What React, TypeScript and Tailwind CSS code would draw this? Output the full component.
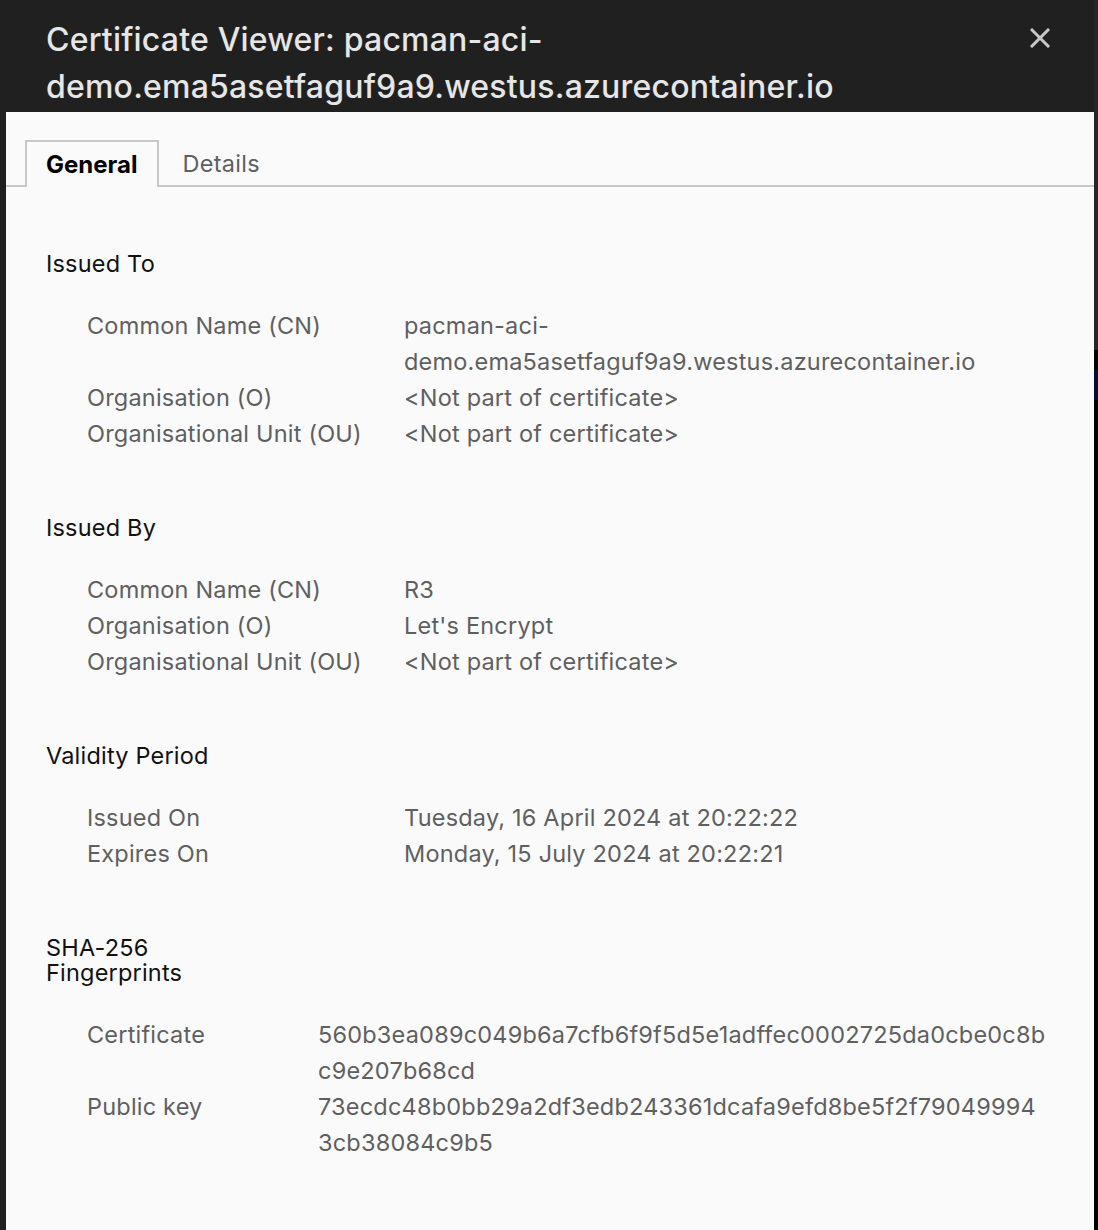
import React from "react";

type Row = { label: string; value: React.ReactNode };

const Section: React.FC<{ title: string[]; rows: Row[]; cols: string; first?: boolean }> = ({ title, rows, cols, first }) => {
  return (
    <div className={first ? "" : "mt-[63px]"}>
      <h2 className="text-[23.5px] tracking-[0.2px] leading-[25px] text-[#111]">
        {title.map((t) => (
          <div key={t} className="h-[25px]">
            {t}
          </div>
        ))}
      </h2>
      <div className={`mt-[32px] pl-[41px] grid ${cols} text-[23.5px] tracking-[0.2px] leading-[36px] text-[#5f5f5f]`}>
        {rows.map((r) => (
          <React.Fragment key={r.label}>
            <div>{r.label}</div>
            <div className="whitespace-nowrap">{r.value}</div>
          </React.Fragment>
        ))}
      </div>
    </div>
  );
};

const App: React.FC = () => {
  return (
    <div className="w-[1098px] h-[1230px] flex bg-[#202020] overflow-hidden" style={{ fontFamily: "Inter, 'Noto Sans', sans-serif" }}>
      <div className="w-[6px] bg-[#202020]"></div>
      <div className="w-[1088px] flex flex-col bg-[#fafafa]">
        {/* header */}
        <div className="h-[112px] bg-[#202020] flex justify-between pl-[40px] pr-[44px] pt-[16px]">
          <h1 className="text-[32px] tracking-[0.2px] leading-[47px] font-medium text-[#e6e6e6]">
            Certificate Viewer: pacman-aci-
            <br />
            demo.ema5asetfaguf9a9.westus.azurecontainer.io
          </h1>
          <button className="mt-[12px] w-[20px] h-[20px]">
            <svg width="20" height="20" viewBox="0 0 20 20">
              <path d="M2 2 L18 18 M18 2 L2 18" stroke="#c8c8c8" strokeWidth="3" strokeLinecap="square" />
            </svg>
          </button>
        </div>

        {/* tabs */}
        <div className="mt-[28px] flex pl-[19px] border-b-2 border-[#c8c8c8]">
          <div className="h-[47px] -mb-[2px] pl-[19px] pr-[20px] border-2 border-b-0 border-[#c8c8c8] bg-[#fafafa] text-[24px] font-bold text-black flex items-center">
            General
          </div>
          <div className="h-[47px] -mb-[2px] pl-[23px] text-[23.5px] tracking-[0.3px] text-[#5f5f5f] flex items-center">Details</div>
        </div>

        {/* body */}
        <div className="px-[40px] pt-[64px]">
          <Section
            first
            title={["Issued To"]}
            cols="grid-cols-[317px_1fr]"
            rows={[
              {
                label: "Common Name (CN)",
                value: (
                  <>
                    pacman-aci-
                    <br />
                    demo.ema5asetfaguf9a9.westus.azurecontainer.io
                  </>
                ),
              },
              { label: "Organisation (O)", value: "<Not part of certificate>" },
              { label: "Organisational Unit (OU)", value: "<Not part of certificate>" },
            ]}
          />
          <Section
            title={["Issued By"]}
            cols="grid-cols-[317px_1fr]"
            rows={[
              { label: "Common Name (CN)", value: "R3" },
              { label: "Organisation (O)", value: "Let's Encrypt" },
              { label: "Organisational Unit (OU)", value: "<Not part of certificate>" },
            ]}
          />
          <Section
            title={["Validity Period"]}
            cols="grid-cols-[317px_1fr]"
            rows={[
              { label: "Issued On", value: "Tuesday, 16 April 2024 at 20:22:22" },
              { label: "Expires On", value: "Monday, 15 July 2024 at 20:22:21" },
            ]}
          />
          <Section
            title={["SHA-256", "Fingerprints"]}
            cols="grid-cols-[231px_1fr]"
            rows={[
              {
                label: "Certificate",
                value: (
                  <>
                    560b3ea089c049b6a7cfb6f9f5d5e1adffec0002725da0cbe0c8b
                    <br />
                    c9e207b68cd
                  </>
                ),
              },
              {
                label: "Public key",
                value: (
                  <>
                    73ecdc48b0bb29a2df3edb243361dcafa9efd8be5f2f79049994
                    <br />
                    3cb38084c9b5
                  </>
                ),
              },
            ]}
          />
        </div>
      </div>
      <div className="w-[4px] flex flex-col">
        <div className="h-[350px] bg-[#262626]"></div>
        <div className="h-[20px] bg-black"></div>
        <div className="h-[30px] bg-[#0a0a3a]"></div>
        <div className="flex-1 bg-black"></div>
      </div>
    </div>
  );
};

export default App;
